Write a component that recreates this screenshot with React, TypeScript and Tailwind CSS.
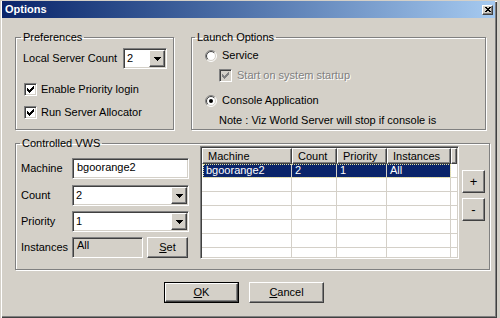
import type { ReactNode } from 'react'

const raised =
  'border border-t-white border-l-white border-r-[#404040] border-b-[#404040] shadow-[inset_-1px_-1px_0_#808080] bg-[#d4d0c8]'
const sunken =
  'border border-t-[#808080] border-l-[#808080] border-r-white border-b-white shadow-[inset_1px_1px_0_#404040,inset_-1px_-1px_0_#d4d0c8]'
const group = 'border border-[#808080] shadow-[1px_1px_0_#fff,inset_1px_1px_0_#fff]'
const disabledText = 'text-[#808080] [text-shadow:1px_1px_0_#fff]'

const COLS = [90, 45, 50, 64]

function Check({ disabled }: { disabled?: boolean }) {
  return (
    <span
      className={`${sunken} w-[13px] h-[13px] flex items-center justify-center shrink-0 ${
        disabled ? 'bg-[#d4d0c8]' : 'bg-white'
      }`}
    >
      <svg width="7" height="7" viewBox="0 0 7 7" shapeRendering="crispEdges">
        {[2, 3, 4, 3, 2, 1, 0].map((y, x) => (
          <rect key={x} x={x} y={y} width="1" height="3" fill={disabled ? '#808080' : '#000'} />
        ))}
      </svg>
    </span>
  )
}

function Radio({ on }: { on?: boolean }) {
  const arc = (r: number, up: boolean) => {
    const d = r * 0.7071
    return up
      ? `M${6 - d} ${6 + d} A${r} ${r} 0 0 1 ${6 + d} ${6 - d}`
      : `M${6 + d} ${6 - d} A${r} ${r} 0 0 1 ${6 - d} ${6 + d}`
  }
  return (
    <svg width="12" height="12" viewBox="0 0 12 12" className="shrink-0">
      <circle cx="6" cy="6" r="5" fill="#fff" />
      <path d={arc(5.5, true)} stroke="#808080" fill="none" />
      <path d={arc(5.5, false)} stroke="#fff" fill="none" />
      <path d={arc(4.5, true)} stroke="#404040" fill="none" />
      <path d={arc(4.5, false)} stroke="#d4d0c8" fill="none" />
      {on && <circle cx="6" cy="6" r="2" fill="#000" />}
    </svg>
  )
}

function Arrow() {
  return (
    <svg width="7" height="4" viewBox="0 0 7 4" shapeRendering="crispEdges">
      <rect x="0" y="0" width="7" height="1" fill="#000" />
      <rect x="1" y="1" width="5" height="1" fill="#000" />
      <rect x="2" y="2" width="3" height="1" fill="#000" />
      <rect x="3" y="3" width="1" height="1" fill="#000" />
    </svg>
  )
}

function Combo({ value, className }: { value: string; className: string }) {
  return (
    <div className={`${sunken} bg-white h-[21px] flex items-stretch p-[1px] ${className}`}>
      <span className="flex-1 pl-[2px] leading-[17px]">{value}</span>
      <span className={`${raised} w-[16px] flex items-center justify-center`}>
        <Arrow />
      </span>
    </div>
  )
}

function Legend({ children }: { children: ReactNode }) {
  return <legend className="px-[2px] leading-[13px]">{children}</legend>
}

export default function App() {
  return (
    <div className="w-[500px] h-[318px] bg-[#d4d0c8] font-['Liberation_Sans',Arial,sans-serif] text-[11px] leading-[13px] text-black">
      <div className="w-[497px] h-[318px] pt-[1px] px-[2px] shadow-[inset_1px_1px_0_#d4d0c8,inset_2px_2px_0_#fff,inset_-1px_-1px_0_#404040,inset_-2px_-2px_0_#808080]">
        {/* Title bar */}
        <div className="h-[17px] flex items-center justify-between pl-[3px] pr-[2px] bg-gradient-to-r from-[#0a246a] to-[#a6caf0]">
          <span className="font-bold text-white">Options</span>
          <span className={`${raised} w-[11px] h-[10px] flex items-center justify-center`}>
            <svg width="6" height="5" viewBox="0 0 6 5" shapeRendering="crispEdges">
              <path d="M0 0h2v1h2v-1h2v1h-1v1h-1v1h1v1h1v1h-2v-1h-2v1h-2v-1h1v-1h1v-1h-1v-1h-1z" fill="#000" />
            </svg>
          </span>
        </div>

        <div className="pl-[13px]">
          {/* Top groups */}
          <div className="flex gap-[17px] mt-[13px]">
            <fieldset className={`${group} w-[159px] h-[99px] px-[5px]`}>
              <Legend>Preferences</Legend>
              <div className="flex items-center mt-[4px] ml-[2px]">
                <span className="w-[100px]">Local Server Count</span>
                <Combo value="2" className="w-[44px]" />
              </div>
              <div className="flex items-center gap-[4px] mt-[14px] ml-[3px]">
                <Check />
                <span>Enable Priority login</span>
              </div>
              <div className="flex items-center gap-[4px] mt-[10px] ml-[3px]">
                <Check />
                <span>Run Server Allocator</span>
              </div>
            </fieldset>

            <fieldset className={`${group} w-[295px] h-[99px] px-[3px]`}>
              <Legend>Launch Options</Legend>
              <div className="flex items-center gap-[5px] mt-[5px] ml-[10px]">
                <Radio />
                <span>Service</span>
              </div>
              <div className="flex items-center gap-[5px] mt-[7px] ml-[24px]">
                <Check disabled />
                <span className={disabledText}>Start on system startup</span>
              </div>
              <div className="flex items-center gap-[5px] mt-[12px] ml-[10px]">
                <Radio on />
                <span>Console Application</span>
              </div>
              <div className="mt-[7px] ml-[24px]">Note : Viz World Server will stop if console is</div>
            </fieldset>
          </div>

          {/* Controlled VWS */}
          <fieldset className={`${group} w-[471px] h-[133px] px-[4px] mt-[7px]`}>
            <Legend>Controlled VWS</Legend>
            <div className="flex -mt-[4px]">
              <div className="flex flex-col pt-[12px] ml-[1px] w-[168px]">
                <div className="flex items-center">
                  <span className="w-[51px]">Machine</span>
                  <div className={`${sunken} bg-white h-[21px] w-[117px] pl-[4px] leading-[17px]`}>bgoorange2</div>
                </div>
                <div className="flex items-center mt-[6px]">
                  <span className="w-[51px]">Count</span>
                  <Combo value="2" className="w-[117px]" />
                </div>
                <div className="flex items-center mt-[5px]">
                  <span className="w-[51px]">Priority</span>
                  <Combo value="1" className="w-[117px]" />
                </div>
                <div className="flex items-center mt-[5px]">
                  <span className="w-[51px]">Instances</span>
                  <div className={`${sunken} h-[21px] w-[71px] pl-[4px] leading-[15px]`}>All</div>
                  <button className={`${raised} h-[21px] w-[41px] ml-[4px] leading-[13px]`}>
                    <span className="underline">S</span>et
                  </button>
                </div>
              </div>

              {/* List */}
              <div className={`${sunken} bg-white w-[259px] h-[113px] p-[1px] ml-[11px] overflow-hidden`}>
                <div className="flex h-[16px]">
                  {['Machine', 'Count', 'Priority', 'Instances'].map((h, i) => (
                    <div
                      key={h}
                      className={`${raised} pl-[5px] leading-[14px] shrink-0`}
                      style={{ width: COLS[i] }}
                    >
                      {h}
                    </div>
                  ))}
                  <div className={`${raised} flex-1`} />
                </div>
                <div className="flex h-[14px]">
                  <div className="flex ml-[1px] bg-[#0a246a] text-white outline-1 outline-dotted -outline-offset-1 outline-[#e8e8a0]">
                    {['bgoorange2', '2', '1', 'All'].map((v, i) => (
                      <div
                        key={i}
                        className="pl-[3px] leading-[13px] border-r border-b border-[#d4d0c8] shrink-0"
                        style={{ width: i === 0 ? COLS[0] - 1 : COLS[i] }}
                      >
                        {v}
                      </div>
                    ))}
                  </div>
                  <div className="flex-1 border-b border-[#d4d0c8]" />
                </div>
                {[0, 1, 2, 3, 4, 5].map((r) => (
                  <div key={r} className="flex h-[14px]">
                    {COLS.map((w, i) => (
                      <div
                        key={i}
                        className="border-r border-b border-[#d4d0c8] shrink-0"
                        style={{ width: w }}
                      />
                    ))}
                    <div className="flex-1 border-b border-[#d4d0c8]" />
                  </div>
                ))}
              </div>

              <div className="flex flex-col gap-[5px] pt-[24px] ml-[3px]">
                <button className={`${raised} w-[23px] h-[23px] text-[13px] leading-[13px]`}>+</button>
                <button className={`${raised} w-[23px] h-[23px] text-[13px] leading-[13px]`}>-</button>
              </div>
            </div>
          </fieldset>

          {/* Dialog buttons */}
          <div className="flex gap-[10px] mt-[12px] pl-[149px]">
            <div className="border border-black">
              <button className={`${raised} w-[73px] h-[19px] leading-[13px]`}>
                <span className="underline">O</span>K
              </button>
            </div>
            <button className={`${raised} w-[75px] h-[21px] leading-[13px]`}>
              <span className="underline">C</span>ancel
            </button>
          </div>
        </div>
      </div>
    </div>
  )
}
